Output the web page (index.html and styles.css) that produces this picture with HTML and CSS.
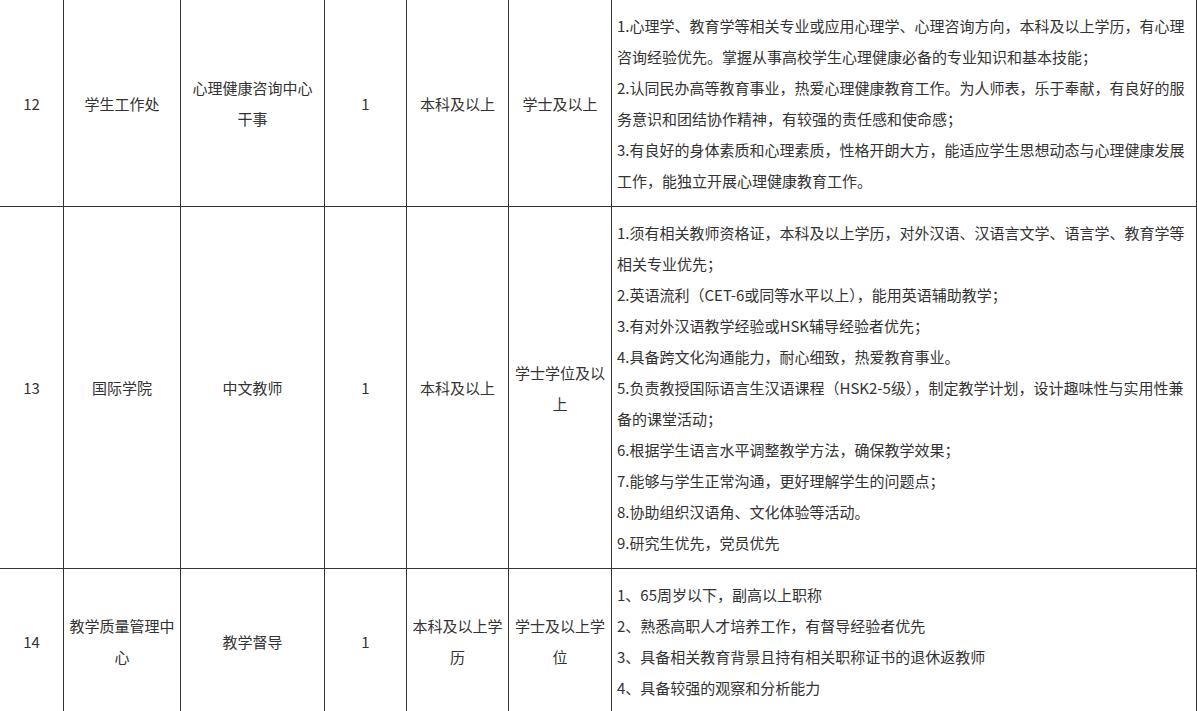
FILE: index.html
```html
<!DOCTYPE html>
<html lang="zh-CN">
<head>
<meta charset="utf-8">
<title>招聘岗位</title>
<link rel="stylesheet" href="styles.css">
</head>
<body>
<table class="jobs">
  <colgroup>
    <col class="c-no">
    <col class="c-dept">
    <col class="c-post">
    <col class="c-num">
    <col class="c-edu">
    <col class="c-deg">
    <col class="c-req">
  </colgroup>
  <tbody>
    <tr>
      <td class="mid">12</td>
      <td class="mid">学生工作处</td>
      <td class="mid">心理健康咨询中心干事</td>
      <td class="mid">1</td>
      <td class="mid">本科及以上</td>
      <td class="mid">学士及以上</td>
      <td class="req">
        <p>1.心理学、教育学等相关专业或应用心理学、心理咨询方向，本科及以上学历，有心理咨询经验优先。掌握从事高校学生心理健康必备的专业知识和基本技能；</p>
        <p>2.认同民办高等教育事业，热爱心理健康教育工作。为人师表，乐于奉献，有良好的服务意识和团结协作精神，有较强的责任感和使命感；</p>
        <p>3.有良好的身体素质和心理素质，性格开朗大方，能适应学生思想动态与心理健康发展工作，能独立开展心理健康教育工作。</p>
      </td>
    </tr>
    <tr>
      <td class="mid">13</td>
      <td class="mid">国际学院</td>
      <td class="mid">中文教师</td>
      <td class="mid">1</td>
      <td class="mid">本科及以上</td>
      <td class="mid">学士学位及以上</td>
      <td class="req">
        <p>1.须有相关教师资格证，本科及以上学历，对外汉语、汉语言文学、语言学、教育学等相关专业优先；</p>
        <p>2.英语流利（CET-6或同等水平以上），能用英语辅助教学；</p>
        <p>3.有对外汉语教学经验或HSK辅导经验者优先；</p>
        <p>4.具备跨文化沟通能力，耐心细致，热爱教育事业。</p>
        <p>5.负责教授国际语言生汉语课程（HSK2-5级），制定教学计划，设计趣味性与实用性兼备的课堂活动；</p>
        <p>6.根据学生语言水平调整教学方法，确保教学效果；</p>
        <p>7.能够与学生正常沟通，更好理解学生的问题点；</p>
        <p>8.协助组织汉语角、文化体验等活动。</p>
        <p>9.研究生优先，党员优先</p>
      </td>
    </tr>
    <tr>
      <td class="mid">14</td>
      <td class="mid">教学质量管理中心</td>
      <td class="mid">教学督导</td>
      <td class="mid">1</td>
      <td class="mid">本科及以上学历</td>
      <td class="mid">学士及以上学位</td>
      <td class="req">
        <p>1、65周岁以下，副高以上职称</p>
        <p>2、熟悉高职人才培养工作，有督导经验者优先</p>
        <p>3、具备相关教育背景且持有相关职称证书的退休返教师</p>
        <p>4、具备较强的观察和分析能力</p>
      </td>
    </tr>
  </tbody>
</table>
</body>
</html>
```

FILE: styles.css
```css
html, body {
  margin: 0;
  padding: 0;
  background: #ffffff;
}

body {
  font-family: "Noto Sans CJK SC", "Noto Sans", sans-serif;
  font-size: 15px;
  line-height: 31px;
  color: #333333;
  overflow: hidden;
}

.jobs {
  border-collapse: collapse;
  table-layout: fixed;
  width: 1198px;
  margin: -1px 0 0 -1px;
}

.c-no { width: 64px; }
.c-dept { width: 117px; }
.c-post { width: 144px; }
.c-num { width: 82px; }
.c-edu { width: 102px; }
.c-deg { width: 103px; }
.c-req { width: 585px; }

.jobs td {
  border: 1px solid #333333;
  padding: 10px 5px;
  vertical-align: middle;
}

.jobs td.mid {
  text-align: center;
}

.jobs td.req {
  text-align: left;
  padding: 10px 6px 10px 5px;
}

.req p {
  margin: 0;
}
```
